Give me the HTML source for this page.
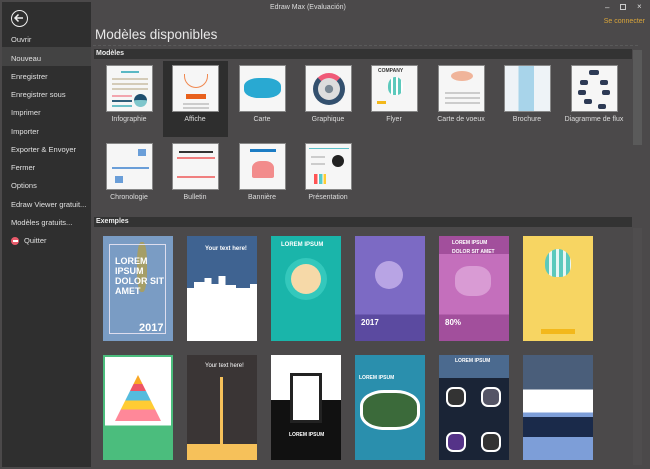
<!DOCTYPE html>
<html><head><meta charset="utf-8"><style>
*{margin:0;padding:0;box-sizing:border-box}
body{width:650px;height:469px;background:#4b494a;font-family:"Liberation Sans",sans-serif;position:relative;overflow:hidden;color:#ddd}
div{white-space:nowrap}
.side{position:absolute;left:2px;top:2px;width:89px;height:465px;background:#2f2f2f}
.mi{position:absolute;left:9px;font-size:7.5px;color:#e0e0e0}
.hl{position:absolute;left:0;top:45px;width:89px;height:19px;background:#434343}
.back{position:absolute;left:9px;top:8px;width:17px;height:17px;border:1.5px solid #eee;border-radius:50%}
.title{position:absolute;left:270px;top:4px;font-size:7px;color:#ddd}
.h1{position:absolute;left:95px;top:27px;font-size:13.5px;color:#e8e8e8}
.dash{position:absolute;left:93px;top:45px;width:545px;border-top:1px dashed #5a5a5a}
.bar{position:absolute;left:94px;width:538px;height:10px;background:#333;font-size:7px;font-weight:bold;color:#eee;padding-left:2px;line-height:10px}
.th{position:absolute;width:47px;height:47px;background:#f6f6f6;border:1px solid #888;overflow:hidden}
.lb{position:absolute;width:66px;text-align:center;font-size:7px;color:#ddd}
.ex{position:absolute;width:70px;height:105px;overflow:hidden}
.sb{position:absolute;left:633px;width:9px;background:#5a5a5a}
.ln{position:absolute;height:2px;background:#ccc}
.t{position:absolute;color:#fff;font-weight:bold;font-size:7px;line-height:9px}
</style></head><body>
<div class="side">
<div class="back"><svg width="14" height="14" viewBox="0 0 14 14" style="position:absolute;left:0;top:0"><path d="M11 7H3M6.5 3.5L3 7l3.5 3.5" stroke="#eee" stroke-width="1.5" fill="none"/></svg></div>
<div class="hl"></div>
<div class="mi" style="top:33px">Ouvrir</div>
<div class="mi" style="top:52px">Nouveau</div>
<div class="mi" style="top:70px">Enregistrer</div>
<div class="mi" style="top:88px">Enregistrer sous</div>
<div class="mi" style="top:106px">Imprimer</div>
<div class="mi" style="top:125px">Importer</div>
<div class="mi" style="top:143px">Exporter &amp; Envoyer</div>
<div class="mi" style="top:161px">Fermer</div>
<div class="mi" style="top:179px">Options</div>
<div class="mi" style="top:198px">Edraw Viewer gratuit...</div>
<div class="mi" style="top:216px">Modèles gratuits...</div>
<div class="mi" style="top:234px;left:22px">Quitter</div>
<div style="position:absolute;left:9px;top:235px;width:8px;height:8px;border-radius:50%;background:#e85a6a"><div style="margin:3px 1.5px;height:2px;background:#fff"></div></div>
</div>
<div class="title">Edraw Max (Evaluación)</div>
<div style="position:absolute;left:605px;top:3px;font-size:8px;color:#ddd">–</div>
<div style="position:absolute;left:620px;top:4px;width:6px;height:6px;border:1px solid #ccc"></div>
<div style="position:absolute;left:637px;top:2px;font-size:8px;color:#ddd">×</div>
<div style="position:absolute;right:5px;top:18px;font-size:7px;color:#d9a53a">Se connecter</div>
<div class="h1">Modèles disponibles</div>
<div class="dash"></div>
<div class="bar" style="top:49px">Modèles</div>
<div style="position:absolute;left:163px;top:61px;width:65px;height:76px;background:#2e2e2e"></div>
<div class="sb" style="top:50px;height:95px"></div>
<div class="bar" style="top:217px">Exemples</div>
<div class="sb" style="top:228px;height:237px;background:#4f4d4e"></div>

<div class="th" style="left:106px;top:65px"><div class="ln" style="left:14px;top:5px;width:18px;background:#5bb8c4"></div><div class="ln" style="left:5px;top:12px;width:36px;background:#d4cbb8"></div><div class="ln" style="left:5px;top:17px;width:36px;background:#d4cbb8"></div><div class="ln" style="left:5px;top:22px;width:36px;background:#d4cbb8"></div><div class="ln" style="left:5px;top:29px;width:20px;background:#f2a5ae"></div><div class="ln" style="left:5px;top:34px;width:20px;background:#2f5e7a"></div><div class="ln" style="left:5px;top:39px;width:20px;background:#6cc0c8"></div><div style="position:absolute;left:27px;top:28px;width:13px;height:13px;border-radius:50%;background:#7fc6cc;border-top:6px solid #1e4e6e"></div></div>
<div class="th" style="left:172px;top:65px"><div style="position:absolute;left:11px;top:8px;width:24px;height:14px;border:1.5px solid #f08850;border-top:none;border-radius:0 0 12px 12px"></div><div style="position:absolute;left:13px;top:28px;width:20px;height:5px;background:#e8601c"></div><div class="ln" style="left:10px;top:37px;width:26px"></div><div class="ln" style="left:10px;top:41px;width:26px"></div></div>
<div class="th" style="left:239px;top:65px"><div style="margin:12px 4px;height:20px;background:#29a9d2;border-radius:40%"></div></div>
<div class="th" style="left:305px;top:65px"><div style="margin:7px;width:32px;height:32px;border:5px solid #33506e;border-radius:50%;border-top-color:#f05a78;background:radial-gradient(#7a8894 25%,#ddd 28%)"></div></div>
<div class="th" style="left:371px;top:65px"><div class="t" style="left:6px;top:1px;color:#333;font-size:5px">COMPANY</div><div style="position:absolute;left:16px;top:11px;width:15px;height:18px;border-radius:50% 50% 40% 40%;background:repeating-linear-gradient(90deg,#5cc9bc 0 3px,#fff 3px 5px)"></div><div style="position:absolute;left:5px;top:35px;width:9px;height:3px;background:#f3b81b"></div></div>
<div class="th" style="left:438px;top:65px"><div style="position:absolute;left:12px;top:5px;width:22px;height:10px;border-radius:50%;background:#f0b49a"></div><div class="ln" style="left:6px;top:26px;width:35px"></div><div class="ln" style="left:6px;top:31px;width:35px"></div><div class="ln" style="left:6px;top:36px;width:35px"></div></div>
<div class="th" style="left:504px;top:65px;background:linear-gradient(90deg,#eef3f7 30%,#a8d4ea 30%,#a8d4ea 65%,#eef3f7 65%)"></div>
<div class="th" style="left:571px;top:65px"><svg width="47" height="47"><g fill="#2d3a55"><rect x="17" y="4" width="10" height="5" rx="2"/><rect x="8" y="14" width="8" height="5" rx="2"/><rect x="28" y="14" width="8" height="5" rx="2"/><rect x="6" y="24" width="8" height="5" rx="2"/><rect x="30" y="24" width="8" height="5" rx="2"/><rect x="12" y="33" width="8" height="5" rx="2"/><rect x="26" y="38" width="8" height="5" rx="2"/></g></svg></div>
<div class="lb" style="left:96px;top:116px">Infographie</div>
<div class="lb" style="left:162px;top:116px">Affiche</div>
<div class="lb" style="left:229px;top:116px">Carte</div>
<div class="lb" style="left:295px;top:116px">Graphique</div>
<div class="lb" style="left:361px;top:116px">Flyer</div>
<div class="lb" style="left:428px;top:116px">Carte de voeux</div>
<div class="lb" style="left:494px;top:116px">Brochure</div>
<div class="lb" style="left:561px;top:116px">Diagramme de flux</div>
<div class="th" style="left:106px;top:143px"><div class="ln" style="left:5px;top:23px;width:37px;background:#6a9ed8"></div><div style="position:absolute;left:31px;top:5px;width:8px;height:7px;background:#6a9ed8"></div><div style="position:absolute;left:8px;top:32px;width:8px;height:7px;background:#6a9ed8"></div></div>
<div class="th" style="left:172px;top:143px"><div class="ln" style="left:6px;top:7px;width:34px;background:#333"></div><div class="ln" style="left:4px;top:13px;width:38px;background:#f07f7f"></div><div class="ln" style="left:4px;top:32px;width:38px;background:#f07f7f"></div></div>
<div class="th" style="left:239px;top:143px"><div class="ln" style="left:10px;top:5px;width:26px;height:3px;background:#1c7cc4"></div><div style="position:absolute;left:12px;top:17px;width:22px;height:17px;background:#f28c8c;border-radius:40% 40% 10% 10%"></div></div>
<div class="th" style="left:305px;top:143px"><div class="ln" style="left:3px;top:4px;width:40px;height:1px;background:#5bc0c8"></div><div class="ln" style="left:5px;top:12px;width:14px"></div><div class="ln" style="left:5px;top:19px;width:14px"></div><div style="position:absolute;left:26px;top:11px;width:12px;height:12px;background:#222;border-radius:50%"></div><div style="position:absolute;left:8px;top:30px;width:12px;height:10px;background:linear-gradient(90deg,#f55 30%,#fff 30% 40%,#5cc 40% 70%,#fff 70% 80%,#fc3 80%)"></div></div>
<div class="lb" style="left:96px;top:194px">Chronologie</div>
<div class="lb" style="left:162px;top:194px">Bulletin</div>
<div class="lb" style="left:229px;top:194px">Bannière</div>
<div class="lb" style="left:295px;top:194px">Présentation</div>

<div class="ex" style="left:103px;top:236px;background:#7a9cc4"><div style="position:absolute;left:34px;top:6px;width:10px;height:50px;background:#b8a040;border-radius:40%;opacity:.7"></div><div style="position:absolute;left:6px;top:8px;width:57px;height:90px;border:1px solid #dde"></div><div class="t" style="left:12px;top:20px;font-size:9px;line-height:10px">LOREM<br>IPSUM<br>DOLOR SIT<br>AMET</div><div class="t" style="left:36px;top:88px;font-size:11px">2017</div></div>
<div class="ex" style="left:187px;top:236px;background:linear-gradient(#3f6391 55%,#fff 55%)"><div class="t" style="left:18px;top:9px;font-size:6px">Your text here!</div><div style="position:absolute;left:0;top:40px;width:70px;height:20px;background:#fff;clip-path:polygon(0 60%,10% 60%,10% 30%,25% 30%,25% 10%,35% 10%,35% 40%,45% 40%,45% 0,55% 0,55% 45%,70% 45%,70% 60%,90% 60%,90% 40%,100% 40%,100% 100%,0 100%)"></div></div>
<div class="ex" style="left:271px;top:236px;background:#1ab5aa"><div class="t" style="left:10px;top:5px;font-size:6px">LOREM IPSUM</div><div style="position:absolute;left:20px;top:28px;width:30px;height:30px;border-radius:50%;background:#f6d9a8;box-shadow:0 0 0 6px #34c8bc"></div></div>
<div class="ex" style="left:355px;top:236px;background:linear-gradient(#7c6ac4 75%,#5b4aa0 75%)"><div style="position:absolute;left:20px;top:25px;width:28px;height:28px;border-radius:50%;background:#b8a4e4"></div><div class="t" style="left:6px;top:82px;font-size:8px">2017</div></div>
<div class="ex" style="left:439px;top:236px;background:linear-gradient(#a24f9c 17%,#c46fbc 17%,#c46fbc 75%,#a24f9c 75%)"><div class="t" style="left:13px;top:3px;font-size:5px">LOREM IPSUM<br>DOLOR SIT AMET</div><div style="position:absolute;left:16px;top:30px;width:36px;height:30px;background:#d99bd4;border-radius:40%"></div><div class="t" style="left:6px;top:82px;font-size:8px">80%</div></div>
<div class="ex" style="left:523px;top:236px;background:#f7d562"><div style="position:absolute;left:22px;top:13px;width:26px;height:28px;border-radius:50% 50% 40% 40%;background:repeating-linear-gradient(90deg,#5cc9bc 0 4px,#e8f6f4 4px 7px)"></div><div style="position:absolute;left:18px;top:93px;width:34px;height:5px;background:#f3b81b"></div></div>
<div class="ex" style="left:103px;top:355px;background:linear-gradient(#fff 68%,#4bbd7d 68%);border:2px solid #4bbd7d"><div style="position:absolute;left:10px;top:18px;width:46px;height:46px;background:linear-gradient(#f9a825 20%,#e56 20% 35%,#5bd 35% 55%,#fc3 55% 75%,#f89 75%);clip-path:polygon(50% 0,100% 100%,0 100%)"></div></div>
<div class="ex" style="left:187px;top:355px;background:linear-gradient(#3a3535 85%,#f6c15a 85%)"><div style="position:absolute;left:33px;top:22px;width:3px;height:70px;background:#f6c15a"></div><div class="t" style="left:18px;top:7px;font-size:6px;font-weight:normal">Your text here!</div></div>
<div class="ex" style="left:271px;top:355px;background:linear-gradient(#fff 43%,#111 43%)"><div style="position:absolute;left:19px;top:18px;width:32px;height:50px;background:#fff;border:3px solid #222"></div><div class="t" style="left:18px;top:76px;font-size:5px">LOREM IPSUM</div></div>
<div class="ex" style="left:355px;top:355px;background:#2a8fad"><div class="t" style="left:4px;top:19px;font-size:5px">LOREM IPSUM</div><div style="position:absolute;left:5px;top:35px;width:60px;height:40px;background:#3b6a3a;border:3px solid #fff;border-radius:40%"></div></div>
<div class="ex" style="left:439px;top:355px;background:linear-gradient(#4b6a8f 22%,#1a2436 22%)"><div class="t" style="left:16px;top:2px;font-size:5px">LOREM IPSUM</div><div style="position:absolute;left:7px;top:32px;width:20px;height:20px;border:2px solid #fff;border-radius:35%;background:#333"></div><div style="position:absolute;left:42px;top:32px;width:20px;height:20px;border:2px solid #fff;border-radius:35%;background:#556"></div><div style="position:absolute;left:7px;top:77px;width:20px;height:20px;border:2px solid #fff;border-radius:35%;background:#538"></div><div style="position:absolute;left:42px;top:77px;width:20px;height:20px;border:2px solid #fff;border-radius:35%;background:#333"></div></div>
<div class="ex" style="left:523px;top:355px;background:linear-gradient(#4a5e7a 33%,#fff 33%,#fff 55%,#7d9ed8 55%)"><div style="position:absolute;left:0;top:62px;width:70px;height:20px;background:#1a2a4a"></div></div>
</body></html>
